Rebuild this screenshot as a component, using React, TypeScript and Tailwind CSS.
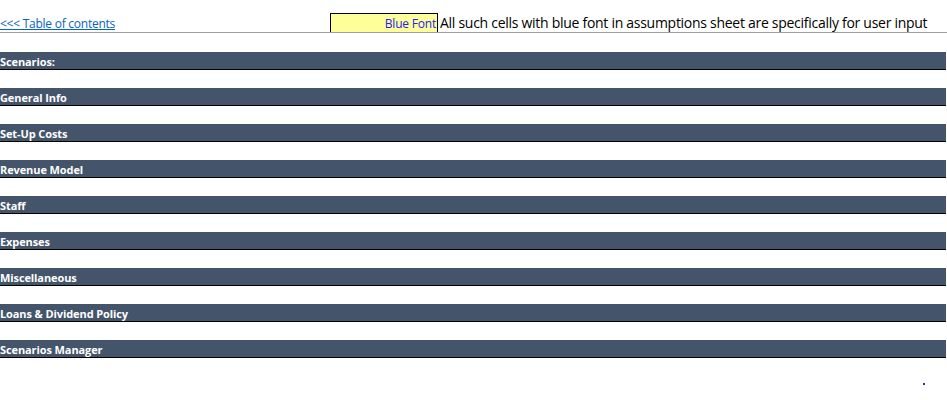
import React from "react";

const sections = [
  "Scenarios:",
  "General Info",
  "Set-Up Costs",
  "Revenue Model",
  "Staff",
  "Expenses",
  "Miscellaneous",
  "Loans & Dividend Policy",
  "Scenarios Manager",
];

export default function App() {
  return (
    <div
      className="relative w-[947px] h-[400px] bg-white overflow-hidden"
      style={{ fontFamily: '"Open Sans", "Noto Sans", sans-serif' }}
    >
      <div className="h-[13px]" />
      <div className="flex items-end h-[20px] border-b border-[#a0a0a0]">
        <a className="w-[330px] text-[12px] leading-[16px] text-[#0563c1] underline tracking-[-0.25px]">
          &lt;&lt;&lt; Table of contents
        </a>
        <div className="w-[108px] h-[19px] bg-[#ffff99] border-t border-l border-r border-black flex items-end justify-end pr-[1px]">
          <span className="text-[12px] leading-[16px] text-[#2020ff] tracking-[-0.2px]">Blue Font</span>
        </div>
        <span className="ml-[2px] text-[14px] leading-[18px] text-black tracking-[-0.28px]">
          All such cells with blue font in assumptions sheet are specifically for user input
        </span>
      </div>
      <div className="flex flex-col gap-[18px] pt-[19px]">
        {sections.map((s) => (
          <div
            key={s}
            className="w-[946px] h-[18px] bg-[#44546a] border-b border-black flex items-end"
          >
            <span className="text-[11px] leading-[15px] font-bold text-white tracking-[-0.1px]">
              {s}
            </span>
          </div>
        ))}
      </div>
      <div className="absolute left-[923px] top-[383px] w-[2px] h-[2px] bg-[#2020ff]" />
    </div>
  );
}
